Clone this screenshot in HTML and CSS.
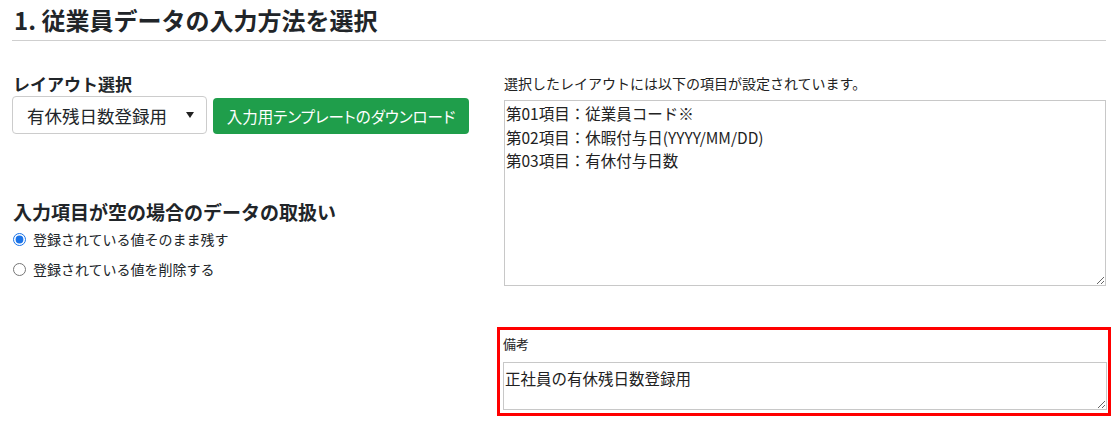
FILE: index.html
```html
<!DOCTYPE html>
<html lang="ja">
<head>
<meta charset="utf-8">
<link rel="stylesheet" href="styles.css">
</head>
<body>
<div class="page">
  <h1 class="title">1. 従業員データの入力方法を選択</h1>
  <div class="cols">
    <div class="left">
      <h2 class="sub sub-layout">レイアウト選択</h2>
      <div class="select-row">
        <div class="select-wrap">
          <select class="select">
            <option>有休残日数登録用</option>
          </select>
        </div>
        <button class="btn">入力用テンプレートのダウンロード</button>
      </div>
      <h2 class="sub sub-empty">入力項目が空の場合のデータの取扱い</h2>
      <label class="radio"><input type="radio" name="empty" checked><span>登録されている値そのまま残す</span></label>
      <label class="radio"><input type="radio" name="empty"><span>登録されている値を削除する</span></label>
    </div>
    <div class="right">
      <div class="label">選択したレイアウトには以下の項目が設定されています。</div>
      <textarea class="ta ta-items" readonly>第01項目：従業員コード※
第02項目：休暇付与日(YYYY/MM/DD)
第03項目：有休付与日数</textarea>
      <div class="remarks">
        <div class="label label-remarks">備考</div>
        <textarea class="ta ta-remarks">正社員の有休残日数登録用</textarea>
      </div>
    </div>
  </div>
</div>
</body>
</html>
```
FILE: styles.css
```css
* { box-sizing: border-box; }
html, body { margin: 0; padding: 0; background: #fff; }
body {
  font-family: "Noto Sans CJK JP", "Noto Sans", sans-serif;
  color: #212529;
}
.page { padding: 0 12px; width: 1118px; }
.title {
  margin: 0;
  padding: 4px 0 4px 2px;
  font-size: 24px;
  line-height: 32px;
  font-weight: 700;
  border-bottom: 1px solid #cfcfcf;
}
.cols { display: flex; }
.left { width: 492px; padding-top: 31px; }
.right { flex: 1; padding-top: 32px; }
.sub {
  margin: 0;
  font-size: 17px;
  line-height: 24px;
  font-weight: 700;
  padding-left: 1px;
}
.select-row { display: flex; align-items: flex-start; margin-top: 0; }
.select-wrap { position: relative; width: 195px; height: 38px; }
.select-wrap::after {
  content: "";
  position: absolute;
  right: 13px;
  top: 16px;
  border-left: 4.5px solid transparent;
  border-right: 4.5px solid transparent;
  border-top: 6px solid #222;
}
.select {
  appearance: none;
  -webkit-appearance: none;
  width: 100%;
  height: 38px;
  border: 1px solid #cccccc;
  border-radius: 4px;
  background: #fff;
  font-family: inherit;
  font-size: 17.5px;
  color: #212529;
  padding: 0 0 0 14px;
  margin: 0;
}
.btn {
  margin: 2px 0 0 6px;
  width: 256px;
  height: 36px;
  border: none;
  border-radius: 4px;
  background: #1f9e4b;
  color: #fff;
  font-family: inherit;
  font-size: 15.5px;
  font-feature-settings: "palt";
  padding: 0;
}
.sub-empty { margin-top: 66px; font-size: 19px; }
.radio {
  display: flex;
  align-items: center;
  font-size: 14px;
  line-height: 20px;
  height: 30px;
  color: #212529;
}
.radio input {
  margin: 0 7px 0 1px;
  width: 13px;
  height: 13px;
  accent-color: #1a73e8;
}
.label {
  font-size: 14px;
  line-height: 20px;
  color: #222;
  padding-left: 0;
}
.ta {
  display: block;
  width: 100%;
  border: 1px solid #c8c8c8;
  border-radius: 0;
  font-family: inherit;
  font-size: 15.5px;
  line-height: 23.5px;
  color: #222;
  padding: 1px 1px;
  margin: 0;
  resize: vertical;
}
.ta-items { height: 186px; margin-top: 7px; }
.remarks {
  margin: 41px -5px 0 -7px;
  border: 3px solid #ff0000;
  padding: 3px 1px 3px 3px;
}
.label-remarks { font-size: 13px; line-height: 22px; margin-bottom: 7px; }
.ta-remarks { height: 48px; padding-top: 4px; }
```
